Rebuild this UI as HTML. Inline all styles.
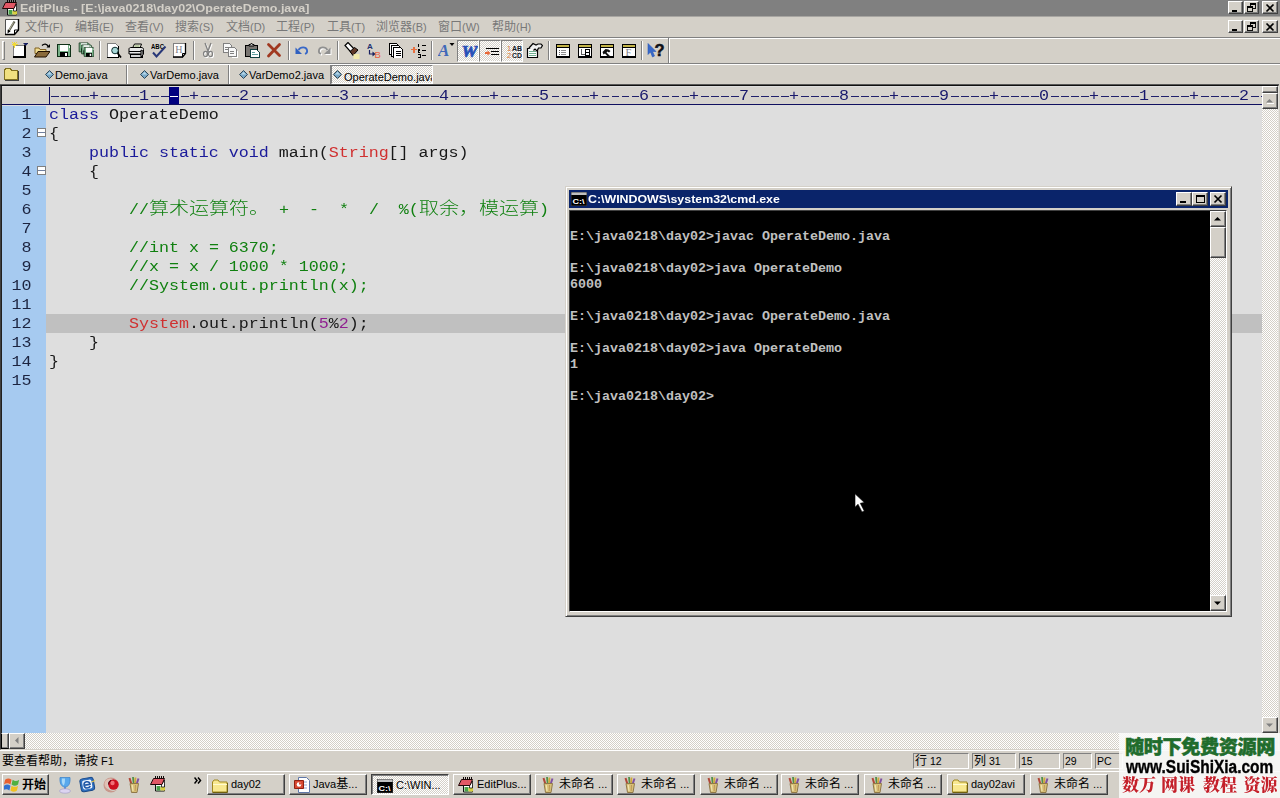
<!DOCTYPE html>
<html><head><meta charset="utf-8"><title>EditPlus</title>
<style>
*{box-sizing:border-box;margin:0;padding:0}
html,body{width:1280px;height:798px;overflow:hidden;background:#d4d0c8}
body{position:relative;font-family:"Liberation Sans",sans-serif;font-size:11px;color:#000}
.a{position:absolute}
.cjt{font-family:"Liberation Sans","Noto Sans CJK SC",sans-serif;font-size:12px;font-style:normal;font-weight:normal}
.ui{font-family:"Liberation Sans",sans-serif;font-size:11px;white-space:nowrap}
.mono{font-family:"Liberation Mono",monospace;white-space:pre}
/* classic 3d button */
.btn{position:absolute;background:#d4d0c8;border:1px solid;border-color:#fff #404040 #404040 #fff;box-shadow:inset -1px -1px 0 #808080}
.dither{background-image:conic-gradient(#fff 25%,#d4d0c8 0 50%,#fff 0 75%,#d4d0c8 0);background-size:2px 2px}
/* title */
#title{left:0;top:0;width:1280px;height:17px;background:#808080;border-bottom:1px solid #a8a6a2}
#title .t{left:20px;top:1px;color:#d4d0c8;font-weight:bold;font-size:11px;line-height:14px;transform:scaleX(1.135);transform-origin:0 0;white-space:nowrap}
#menu{left:0;top:16px;width:1280px;height:21px}
#menu .m{top:4px;color:#787878;line-height:15px;font-size:11px}
.hl{left:0;width:1280px;height:1px}
/* tabs */
#tabs{left:0;top:65px;width:1280px;height:20px}
.tab{top:0;height:20px;font-size:11px;line-height:20px}
/* editor */
#ed{left:0;top:85px;width:1279px;height:665px;background:#dedede;border:1px solid #404040;border-top-color:#101010;border-bottom-color:#d4d0c8;border-right-color:#e4e2de;box-shadow:inset 1px 0 0 #202020}
#ruler{left:1px;top:1px;width:1260px;height:18px;background:#d6d3ce;border-bottom:1px solid #101060;overflow:hidden}
#ruler .r{left:47px;top:0;font-size:14px;line-height:19px;color:#18186c;transform:scaleX(1.19028);transform-origin:0 0}
#gut{left:1px;top:20px;width:44px;height:628px;background:#a6caf0}
.ln{left:-10px;top:0;width:34px;height:19px;text-align:right;font-size:14px;line-height:21px;color:#1c2440;transform:scaleX(1.19028);transform-origin:0 0}
.cl{height:19px;font-size:14px;line-height:21px;color:#181818;transform:scaleX(1.19028);transform-origin:0 0}
.cl i,.ln i,.r i{display:inline-block;width:8.4014px;font-style:normal;text-align:center}
.kw{color:#1a1a9a}.ty{color:#d03030}.cm{color:#108010}.nu{color:#902090}
.cmcj{height:19px;line-height:19px;font-family:"Liberation Mono","Noto Sans CJK SC",monospace;font-weight:300;font-size:17px;color:#108010;white-space:nowrap;transform:scaleX(1.1767);transform-origin:0 0}
.fold{left:36px;width:9px;height:9px;background:#fff;border:1px solid #808080}
.fold i{position:absolute;left:0;top:3px;width:7px;height:1px;background:#7080a0}
/* cmd */
#cmd{left:565px;top:186px;width:667px;height:431px;background:#d4d0c8;border:1px solid;border-color:#d4d0c8 #404040 #404040 #d4d0c8;box-shadow:inset 1px 1px 0 #fff,inset -1px -1px 0 #808080}
#cmdt{left:3px;top:3px;width:659px;height:18px;background:#0a246a}
#cmdt .t{left:19px;top:2px;color:#fff;font-weight:bold;font-size:11px;line-height:15px;transform:scaleX(1.125);transform-origin:0 0;white-space:nowrap}
#con{left:3px;top:23px;width:641px;height:402px;background:#000;border-top:1px solid #404040;border-left:1px solid #404040;border-bottom:1px solid #fff}
#con .tx{left:0px;top:2px;font-family:"Liberation Mono",monospace;font-weight:bold;font-size:13.333px;line-height:16px;color:#c0c0c0;white-space:pre}
/* status */
#status{left:0;top:751px;width:1280px;height:20px}
.pane{top:2px;height:16px;border:1px solid;border-color:#808080 #fff #fff #808080;font-size:10.5px;line-height:14px;padding-left:1px;white-space:nowrap}
/* taskbar */
#task{left:0;top:771px;width:1280px;height:27px;background:#d4d0c8;border-top:1px solid #fff}
.tb{top:2px;height:21px;width:78px;font-size:11px;line-height:19px;white-space:nowrap;overflow:hidden}
.tb span{position:absolute;left:23px;top:0}
.wmr{font-family:"Liberation Serif","Noto Serif CJK SC",serif;font-weight:900;font-size:17px;line-height:17px;color:#c4202a;white-space:nowrap;filter:drop-shadow(0 0 1px #fff)}
</style></head><body>

<!-- ============ TITLE BAR ============ -->
<div id="title" class="a">
  <div class="a t">EditPlus - [E:\java0218\day02\OperateDemo.java]</div>
  <svg class="a" style="left:2px;top:0px" width="16" height="16" viewBox="0 0 16 16" ><path d="M5.500 8.500h9v6.500h-9z" fill="#fff" stroke="#101010"/><path d="M6.500 10h4v4.500h-4z" fill="#48a048"/><path d="M10.500 11h4.500v3.500h-4.500z" fill="#d8d040"/><path d="M11.500 8.500l3-4.500v7h-3z" fill="#fff" stroke="#101010" stroke-width=".8"/><path d="M3.500 2.500h11l-2.500 6h-11.500z" fill="#e25866" stroke="#200808"/><path d="M5.500 0v2.500M7.500 0v2.500M9.500 0v2.500M11.500 0v2.500M13.500 0v2.500" stroke="#100808"/></svg>
  <div class="btn" style="left:1228px;top:1px;width:15px;height:13px"><svg class="a" style="left:0;top:0" width="13" height="11" viewBox="0 0 14 11" shape-rendering="crispEdges"><path d="M3 8h6v2h-6z" fill="#000"/></svg></div><div class="btn" style="left:1244px;top:1px;width:15px;height:13px"><svg class="a" style="left:0;top:0" width="13" height="11" viewBox="0 0 14 11" shape-rendering="crispEdges"><path d="M5.500 1.500h6v5h-6z" fill="none" stroke="#000"/><path d="M5 1h7v2h-7z" fill="#000"/><path d="M2.500 4.500h6v5h-6z" fill="#d4d0c8" stroke="#000"/><path d="M2 4h7v2h-7z" fill="#000"/></svg></div><div class="btn" style="left:1262px;top:1px;width:16px;height:13px"><svg class="a" style="left:0;top:0" width="14" height="11" viewBox="0 0 14 11" shape-rendering="crispEdges"><path d="M3.5 2.5l7 7M10.5 2.5l-7 7" stroke="#000" stroke-width="1.7" shape-rendering="auto"/></svg></div>
</div>

<!-- ============ MENU BAR ============ -->
<div id="menu" class="a ui">
  <svg class="a" style="left:4px;top:3px" width="16" height="17" viewBox="0 0 16 17" ><path d="M1.500 .500h13v10.500l-4 4.500h-9z" fill="#fff" stroke="#505050"/><path d="M14.500 0v11l-4 4.500h-9.500" fill="none" stroke="#000" stroke-width="1.400"/><path d="M10.500 15v-4h4" fill="none" stroke="#000"/><path d="M10.500 2.500l-6 10" stroke="#585848" stroke-width="2.200"/><path d="M9.500 3.500l-5 8.500" stroke="#c8c8b0" stroke-width=".8"/><path d="M3.500 14.500l.3-4 2.800 1.700z" fill="#000"/></svg>
  <div class="a m" style="left:25px"><em class="cjt">文件</em>(F)</div>
  <div class="a m" style="left:75px"><em class="cjt">编辑</em>(E)</div>
  <div class="a m" style="left:125px"><em class="cjt">查看</em>(V)</div>
  <div class="a m" style="left:175px"><em class="cjt">搜索</em>(S)</div>
  <div class="a m" style="left:226px"><em class="cjt">文档</em>(D)</div>
  <div class="a m" style="left:276px"><em class="cjt">工程</em>(P)</div>
  <div class="a m" style="left:327px"><em class="cjt">工具</em>(T)</div>
  <div class="a m" style="left:376px"><em class="cjt">浏览器</em>(B)</div>
  <div class="a m" style="left:438px"><em class="cjt">窗口</em>(W)</div>
  <div class="a m" style="left:492px"><em class="cjt">帮助</em>(H)</div>
  <div class="btn" style="left:1228px;top:4px;width:15px;height:13px"><svg class="a" style="left:0;top:0" width="13" height="11" viewBox="0 0 14 11" shape-rendering="crispEdges"><path d="M3 8h6v2h-6z" fill="#000"/></svg></div><div class="btn" style="left:1244px;top:4px;width:15px;height:13px"><svg class="a" style="left:0;top:0" width="13" height="11" viewBox="0 0 14 11" shape-rendering="crispEdges"><path d="M5.500 1.500h6v5h-6z" fill="none" stroke="#000"/><path d="M5 1h7v2h-7z" fill="#000"/><path d="M2.500 4.500h6v5h-6z" fill="#d4d0c8" stroke="#000"/><path d="M2 4h7v2h-7z" fill="#000"/></svg></div><div class="btn" style="left:1262px;top:4px;width:16px;height:13px"><svg class="a" style="left:0;top:0" width="14" height="11" viewBox="0 0 14 11" shape-rendering="crispEdges"><path d="M3.5 2.5l7 7M10.5 2.5l-7 7" stroke="#000" stroke-width="1.7" shape-rendering="auto"/></svg></div>
</div>
<div class="a hl" style="top:37px;background:#808080"></div>
<div class="a hl" style="top:38px;background:#fff"></div>

<!-- ============ TOOLBAR ============ -->
<div id="tool" class="a" style="left:0;top:39px;width:1280px;height:24px">
<div class="a" style="left:2px;top:2px;width:3px;height:19px;border:1px solid;border-color:#fff #808080 #808080 #fff"></div><svg class="a" style="left:12px;top:3px" width="16" height="16" viewBox="0 0 16 16" shape-rendering="crispEdges" ><path d="M1.500 3.500h11v11h-11z" fill="#fff" stroke="#808080"/><path d="M13 3v12h-12" fill="none" stroke="#000" stroke-width="1.4"/><path d="M2.500 0v6M0 2.500h5.500M.5 .5l4 4M4.500 .5l-4 4" stroke="#f0d838"/><path d="M11 1h5.500l-2.750 3z" fill="#182060" shape-rendering="auto"/></svg><svg class="a" style="left:34px;top:3px" width="16" height="16" viewBox="0 0 16 16" shape-rendering="crispEdges" ><path d="M1 6h4l1 1.500h6v4h-11z" fill="#f0dc90" stroke="#806020" shape-rendering="auto"/><path d="M0.500 15l3.500-5.500h12l-4 5.500z" fill="#8a6a3a" stroke="#201000" shape-rendering="auto"/><path d="M8 3.500c2-2 5-2 6.500 1.500" fill="none" stroke="#000" stroke-width="1.3" shape-rendering="auto"/><path d="M12.500 5.500h3.500v-3.500z" fill="#000" shape-rendering="auto"/></svg><svg class="a" style="left:56px;top:3px" width="16" height="16" viewBox="0 0 16 16" shape-rendering="crispEdges" ><path d="M1.500 2.500h12l1 1v11h-13z" fill="#78b088" stroke="#103018"/><path d="M4 3h8v6h-8z" fill="#fff"/><path d="M4 10h8v5h-8z" fill="#000"/><path d="M9 11h2v3h-2z" fill="#fff"/><path d="M13 4h1v2h-1z" fill="#fff"/></svg><svg class="a" style="left:78px;top:3px" width="16" height="16" viewBox="0 0 16 16" ><g transform="translate(0,-1) scale(.75)"><path d="M1.500 2.500h12l1 1v11h-13z" fill="#78b088" stroke="#103018"/><path d="M4 3h8v6h-8z" fill="#fff"/><path d="M4 10h8v5h-8z" fill="#000"/><path d="M9 11h2v3h-2z" fill="#fff"/><path d="M13 4h1v2h-1z" fill="#fff"/></g><g transform="translate(2.500,1) scale(.75)"><path d="M1.500 2.500h12l1 1v11h-13z" fill="#78b088" stroke="#103018"/><path d="M4 3h8v6h-8z" fill="#fff"/><path d="M4 10h8v5h-8z" fill="#000"/><path d="M9 11h2v3h-2z" fill="#fff"/><path d="M13 4h1v2h-1z" fill="#fff"/></g><g transform="translate(5,3.500) scale(.75)"><path d="M1.500 2.500h12l1 1v11h-13z" fill="#78b088" stroke="#103018"/><path d="M4 3h8v6h-8z" fill="#fff"/><path d="M4 10h8v5h-8z" fill="#000"/><path d="M9 11h2v3h-2z" fill="#fff"/><path d="M13 4h1v2h-1z" fill="#fff"/></g></svg><div class="a" style="left:99px;top:2px;width:1px;height:19px;background:#808080"></div><div class="a" style="left:100px;top:2px;width:1px;height:19px;background:#fff"></div><svg class="a" style="left:106px;top:3px" width="16" height="16" viewBox="0 0 16 16" shape-rendering="crispEdges" ><path d="M1.500 1.500h8l3 3v10.500h-11z" fill="#fff" stroke="#808080"/><path d="M12.500 4v11.500h-11.500" fill="none" stroke="#000" stroke-width="1.3"/><circle cx="9" cy="8.500" r="3.300" fill="#a8d8d8" stroke="#103030" shape-rendering="auto"/><path d="M11.500 11l3.500 4.500" stroke="#000" stroke-width="1.800" shape-rendering="auto"/></svg><svg class="a" style="left:128px;top:3px" width="16" height="16" viewBox="0 0 16 16" shape-rendering="crispEdges" ><path d="M4.500 6l2-4h7l-1.500 4z" fill="#f4f4e4" stroke="#000" shape-rendering="auto"/><path d="M6.500 4h5" stroke="#80a060" shape-rendering="auto"/><path d="M1 7c0-1 1-1.500 2-1.500h10c1.500 0 2.500 .5 2.500 2v4.500h-14.500z" fill="#e8e8e8" stroke="#000" shape-rendering="auto"/><path d="M1 9.500h12M1.500 12.500h12" stroke="#000" stroke-width="1.200"/><path d="M2 12.500h12v2.500h-12z" fill="#d0d0d0" stroke="#000"/><path d="M13 8l2 1v4l-2 2z" fill="#c0c0c0" stroke="#000" shape-rendering="auto"/></svg><svg class="a" style="left:151px;top:3px" width="16" height="16" viewBox="0 0 16 16" ><text x="0" y="7" font-family="Liberation Sans" font-weight="bold" font-size="7.500" fill="#000" textLength="13" lengthAdjust="spacingAndGlyphs">ABC</text><path d="M2 10.500l3.500 4 9-10" fill="none" stroke="#283878" stroke-width="2"/></svg><svg class="a" style="left:172px;top:3px" width="16" height="16" viewBox="0 0 16 16" shape-rendering="crispEdges" ><path d="M1.500 1.500h12v10l-3 3.500h-9z" fill="#fff" stroke="#808080"/><path d="M13.500 1v10.500l-3 3.500h-9.500" fill="none" stroke="#000" stroke-width="1.300" shape-rendering="auto"/><path d="M10.500 15v-3.500h3" fill="none" stroke="#000" shape-rendering="auto"/><text x="3.200" y="10.500" font-family="Liberation Serif" font-size="10" fill="#808088">H</text></svg><div class="a" style="left:193px;top:2px;width:1px;height:19px;background:#808080"></div><div class="a" style="left:194px;top:2px;width:1px;height:19px;background:#fff"></div><svg class="a" style="left:200px;top:3px" width="16" height="16" viewBox="0 0 16 16" ><g transform="translate(1,1)"><path d="M5 1l3 8M11 1l-3 8" fill="none" stroke="#fff" stroke-width="1.300"/><ellipse cx="5.500" cy="12" rx="2" ry="2.700" fill="none" stroke="#fff" stroke-width="1.200"/><ellipse cx="10.500" cy="12" rx="2" ry="2.700" fill="none" stroke="#fff" stroke-width="1.200"/><path d="M7 10.500l1-1.500 1 1.500" fill="none" stroke="#fff"/></g><path d="M5 1l3 8M11 1l-3 8" fill="none" stroke="#808080" stroke-width="1.300"/><ellipse cx="5.500" cy="12" rx="2" ry="2.700" fill="none" stroke="#808080" stroke-width="1.200"/><ellipse cx="10.500" cy="12" rx="2" ry="2.700" fill="none" stroke="#808080" stroke-width="1.200"/><path d="M7 10.500l1-1.500 1 1.500" fill="none" stroke="#808080"/></svg><svg class="a" style="left:222px;top:3px" width="16" height="16" viewBox="0 0 16 16" shape-rendering="crispEdges" ><g transform="translate(1,1)"><path d="M.500 .500h6l2 2v7h-8z" fill="#f8f8f8" stroke="#808080"/><path d="M2 4h4M2 6h4" stroke="#808080"/></g><g transform="translate(6,5)"><path d="M.500 .500h6l2 2v7h-8z" fill="#f8f8f8" stroke="#808080"/><path d="M2 4h4M2 6h4" stroke="#808080"/></g><path d="M10 15.500h5.500v-7" fill="none" stroke="#fff"/></svg><svg class="a" style="left:244px;top:3px" width="16" height="16" viewBox="0 0 16 16" shape-rendering="crispEdges" ><path d="M1.500 3.500h12v11h-12z" fill="#787470" stroke="#000" stroke-width="1.300"/><path d="M5 4v-1.500h1.500l1-1.500 1 1.500h1.500v1.500z" fill="#d0d0d0" stroke="#000" shape-rendering="auto"/><path d="M6.500 7.500h6l3 3v5h-9z" fill="#fff" stroke="#104040"/><path d="M8 10.500h3M8 12.500h6" stroke="#60a0a0"/></svg><svg class="a" style="left:266px;top:3px" width="16" height="16" viewBox="0 0 16 16" ><path d="M2.500 2.500l11 11M13.500 2.500l-11 11.500" stroke="#a03820" stroke-width="2.800" stroke-linecap="round"/></svg><div class="a" style="left:288px;top:2px;width:1px;height:19px;background:#808080"></div><div class="a" style="left:289px;top:2px;width:1px;height:19px;background:#fff"></div><svg class="a" style="left:294px;top:3px" width="16" height="16" viewBox="0 0 16 16" ><path d="M4.500 8c2-3.500 7.500-3.500 8.500 0 .5 2-.5 3.500-2 4" fill="none" stroke="#3868c8" stroke-width="1.800"/><path d="M1.500 5.500v6.500h6.500z" fill="#3060c0"/></svg><svg class="a" style="left:316px;top:3px" width="16" height="16" viewBox="0 0 16 16" ><g transform="translate(1,1)"><path d="M11.500 8c-2-3.500-7.500-3.500-8.500 0-.5 2 .5 3.500 2 4" fill="none" stroke="#fff" stroke-width="1.800"/><path d="M14.500 5.500v6.500h-6.500z" fill="#fff"/></g><path d="M11.500 8c-2-3.500-7.500-3.500-8.500 0-.5 2 .5 3.500 2 4" fill="none" stroke="#909090" stroke-width="1.800"/><path d="M14.500 5.500v6.500h-6.500z" fill="#909090"/></svg><div class="a" style="left:337px;top:2px;width:1px;height:19px;background:#808080"></div><div class="a" style="left:338px;top:2px;width:1px;height:19px;background:#fff"></div><svg class="a" style="left:344px;top:3px" width="17" height="17" viewBox="0 0 17 17" ><path d="M1 3.500l3-3 8 8.500-3.500 3z" fill="#fff" stroke="#000" stroke-width="1.200"/><path d="M6 9.500l4.500-4 3.500 2.500-5 5.500z" fill="#603828" stroke="#000"/><path d="M9.500 12h6v5h-6z" fill="#f8f0a8" opacity=".85"/></svg><svg class="a" style="left:366px;top:3px" width="16" height="16" viewBox="0 0 16 16" ><text x="1" y="7" font-family="Liberation Sans" font-weight="bold" font-size="8" fill="#203070">A</text><path d="M3.500 8v4h4" fill="none" stroke="#182060" stroke-width="1.200"/><path d="M6.500 9.500l3 2.500-3 2.500z" fill="#182060"/><text x="8.500" y="15.500" font-family="Liberation Sans" font-size="9.500" fill="#e86040">B</text></svg><svg class="a" style="left:388px;top:3px" width="16" height="16" viewBox="0 0 16 16" shape-rendering="crispEdges" ><g transform="translate(1,1)"><path d="M.500 .500h7l2 2v8.500h-9z" fill="#fff" stroke="#000"/></g><g transform="translate(3,3)"><path d="M.500 .500h7l2 2v8.500h-9z" fill="#fff" stroke="#000"/></g><g transform="translate(5,5)"><path d="M.500 .500h7l2 2v8.500h-9z" fill="#fff" stroke="#000"/><path d="M2.500 4.500h5M2.500 6.500h5M2.500 8.500h5" stroke="#000"/></g></svg><svg class="a" style="left:410px;top:3px" width="16" height="16" viewBox="0 0 16 16" shape-rendering="crispEdges" ><path d="M1 7.500h6M4 4.500v6" stroke="#e87040" stroke-width="1.400"/><path d="M8.500 2v3M8 7h1.500v1.500h-1.500v1.500h2M8 12h2v3h-2" fill="none" stroke="#000"/><path d="M11.500 3.500h4M11.500 8.500h4M11.500 13.500h4" stroke="#000" stroke-width="1.300"/></svg><div class="a" style="left:431px;top:2px;width:1px;height:19px;background:#808080"></div><div class="a" style="left:432px;top:2px;width:1px;height:19px;background:#fff"></div><svg class="a" style="left:438px;top:3px" width="17" height="16" viewBox="0 0 17 16" ><text x="0" y="14" font-family="Liberation Serif" font-style="italic" font-weight="bold" font-size="17" fill="#4068b8">A</text><path d="M11.500 1h5l-2.500 3z" fill="#000"/></svg><div class="a dither" style="left:457px;top:1px;width:22px;height:22px;border:1px solid;border-color:#808080 #fff #fff #808080"></div><div class="a dither" style="left:479px;top:1px;width:22px;height:22px;border:1px solid;border-color:#808080 #fff #fff #808080"></div><div class="a dither" style="left:501px;top:1px;width:22px;height:22px;border:1px solid;border-color:#808080 #fff #fff #808080"></div><svg class="a" style="left:462px;top:4px" width="16" height="16" viewBox="0 0 16 16" ><text x="-.500" y="14" font-family="Liberation Serif" font-style="italic" font-weight="bold" font-size="16" fill="#2850b8" stroke="#2850b8" stroke-width=".7" textLength="16" lengthAdjust="spacingAndGlyphs">W</text></svg><svg class="a" style="left:484px;top:4px" width="16" height="16" viewBox="0 0 16 16" shape-rendering="crispEdges" ><path d="M2 5.500h13M7 8.500h8M7 11.500h8" stroke="#000" stroke-width="1.200"/><path d="M1 10h4" stroke="#e86838" stroke-width="1.400"/><path d="M3.500 7.500l3 2.500-3 2.500z" fill="#e86838" shape-rendering="auto"/></svg><svg class="a" style="left:506px;top:4px" width="16" height="16" viewBox="0 0 16 16" ><text x="1" y="7.500" font-family="Liberation Sans" font-size="7.500" fill="#d87838">1</text><text x="1" y="14.500" font-family="Liberation Sans" font-size="7.500" fill="#d87838">2</text><text x="6" y="7.500" font-family="Liberation Sans" font-weight="bold" font-size="7.500" fill="#101828" textLength="10" lengthAdjust="spacingAndGlyphs">AB</text><text x="6" y="14.500" font-family="Liberation Sans" font-weight="bold" font-size="7.500" fill="#101828" textLength="10" lengthAdjust="spacingAndGlyphs">CD</text></svg><svg class="a" style="left:526px;top:3px" width="17" height="16" viewBox="0 0 17 16" ><path d="M1.500 6.500h10v9h-10z" fill="#fff" stroke="#000" stroke-width="1.200"/><path d="M3 9.500h7M3 11.500h7M3 13.500h7" stroke="#70b090"/><path d="M3 6l4-4.500 3 1.500 2-1h3l1.500 1.500-1.500 2.500h-2.500l-1.500 3-2-2-1.500 1.500" fill="#f0f0f0" stroke="#000" stroke-width="1.200"/></svg><div class="a" style="left:548px;top:2px;width:1px;height:19px;background:#808080"></div><div class="a" style="left:549px;top:2px;width:1px;height:19px;background:#fff"></div><svg class="a" style="left:556px;top:3px" width="16" height="16" viewBox="0 0 16 16" shape-rendering="crispEdges" ><path d="M.500 2.500h13v12.500h-13z" fill="#fff" stroke="#000" stroke-width="1.200"/><path d="M1 3h12v2h-12z" fill="#c4b448"/><path d="M0 5.500h14" stroke="#000"/><path d="M3 8.500h1M3 10.500h1M3 12.500h1" stroke="#606060"/><path d="M5 8.500h5M5 10.500h5M5 12.500h5" stroke="#909090"/></svg><svg class="a" style="left:578px;top:3px" width="16" height="16" viewBox="0 0 16 16" shape-rendering="crispEdges" ><path d="M.500 2.500h13v12.500h-13z" fill="#fff" stroke="#000" stroke-width="1.200"/><path d="M1 3h12v2h-12z" fill="#c4b448"/><path d="M0 5.500h14" stroke="#000"/><path d="M3.500 7v5.500h4" fill="none" stroke="#606060"/><path d="M7.500 7.500h4v6h-4z" fill="#fff" stroke="#000" stroke-width="1.600"/><path d="M8 10.500h3" stroke="#000"/></svg><svg class="a" style="left:600px;top:3px" width="16" height="16" viewBox="0 0 16 16" shape-rendering="crispEdges" ><path d="M.500 2.500h13v12.500h-13z" fill="#fff" stroke="#000" stroke-width="1.200"/><path d="M1 3h12v2h-12z" fill="#c4b448"/><path d="M0 5.500h14" stroke="#000"/><path d="M2.500 10l3-3 3 .500 2 1.500-1.500 1.500-1.500-1-1 1 3.500 3.500-1.500 1.500-3.500-4-1.500 1z" fill="#101010" shape-rendering="auto"/></svg><svg class="a" style="left:622px;top:3px" width="16" height="16" viewBox="0 0 16 16" shape-rendering="crispEdges" ><path d="M.500 2.500h13v12.500h-13z" fill="#fff" stroke="#000" stroke-width="1.200"/><path d="M1 3h12v2h-12z" fill="#c4b448"/><path d="M0 5.500h14" stroke="#000"/><text x="3.500" y="14" font-family="Liberation Serif" font-size="10.500" fill="#808088" shape-rendering="auto">F</text></svg><div class="a" style="left:641px;top:2px;width:1px;height:19px;background:#808080"></div><div class="a" style="left:642px;top:2px;width:1px;height:19px;background:#fff"></div><svg class="a" style="left:647px;top:3px" width="18" height="16" viewBox="0 0 18 16" ><path d="M1 1.500v11l2.500-2.500 2 5 2-1-2-4.500h3.500z" fill="#3868c8" stroke="#2858b8" stroke-width=".6"/><text x="7.500" y="14" font-family="Liberation Sans" font-weight="bold" font-size="16.500" fill="#101018" stroke="#101018" stroke-width=".5">?</text></svg><div class="a" style="left:668px;top:-1px;width:1px;height:25px;background:#808080"></div><div class="a" style="left:669px;top:-1px;width:1px;height:25px;background:#fff"></div>
</div>
<div class="a hl" style="top:63px;background:#808080"></div>
<div class="a hl" style="top:64px;background:#fff"></div>

<!-- ============ TABS ============ -->
<div id="tabs" class="a ui">
<svg class="a" style="left:3px;top:2px" width="17" height="14" viewBox="0 0 17 14" shape-rendering="crispEdges" ><path d="M1.5 3.5l1-2h5l1 2h6v9h-13z" fill="#f0e080" stroke="#807020"/><path d="M15.500 4v9.500h-13.500" fill="none" stroke="#404040"/></svg><div class="a" style="left:24px;top:0;width:1px;height:19px;background:#fff"></div><div class="a tab" style="left:25px;width:102px;border-right:1px solid #808080;box-shadow:1px 0 0 #fff"><svg class="a" style="left:20px;top:5px" width="9" height="9" viewBox="0 0 9 9" shape-rendering="crispEdges" ><path d="M4.5 .5l4 4-4 4-4-4z" fill="#78a8c8" stroke="#304858" shape-rendering="auto"/><path d="M4.5 2l2.500 2.500h-5z" fill="#b8d8e8" shape-rendering="auto"/></svg><div class="a" style="left:30px;top:0">Demo.java</div></div><div class="a tab" style="left:127px;width:102px;border-right:1px solid #808080;box-shadow:1px 0 0 #fff"><svg class="a" style="left:13px;top:5px" width="9" height="9" viewBox="0 0 9 9" shape-rendering="crispEdges" ><path d="M4.5 .5l4 4-4 4-4-4z" fill="#78a8c8" stroke="#304858" shape-rendering="auto"/><path d="M4.5 2l2.500 2.500h-5z" fill="#b8d8e8" shape-rendering="auto"/></svg><div class="a" style="left:23px;top:0">VarDemo.java</div></div><div class="a tab" style="left:229px;width:102px;border-right:1px solid #808080;box-shadow:1px 0 0 #fff"><svg class="a" style="left:10px;top:5px" width="9" height="9" viewBox="0 0 9 9" shape-rendering="crispEdges" ><path d="M4.5 .5l4 4-4 4-4-4z" fill="#78a8c8" stroke="#304858" shape-rendering="auto"/><path d="M4.5 2l2.500 2.500h-5z" fill="#b8d8e8" shape-rendering="auto"/></svg><div class="a" style="left:20px;top:0">VarDemo2.java</div></div><div class="a tab dither" style="left:331px;width:102px;height:19px;border:1px solid;border-color:#808080 #fff #fff #808080;overflow:hidden"><svg class="a" style="left:1px;top:4px" width="9" height="9" viewBox="0 0 9 9" shape-rendering="crispEdges" ><path d="M4.5 .5l4 4-4 4-4-4z" fill="#78a8c8" stroke="#304858" shape-rendering="auto"/><path d="M4.5 2l2.500 2.500h-5z" fill="#b8d8e8" shape-rendering="auto"/></svg><div class="a" style="left:12px;top:1px">OperateDemo.java</div></div>
</div>

<div class="a hl" style="top:84px;width:1279px;background:#585858"></div>
<!-- ============ EDITOR ============ -->
<div id="ed" class="a">
<div id="ruler" class="a"><div class="a" style="left:47px;top:0;width:1px;height:18px;background:#101060"></div><div class="a" style="left:48px;top:9px;width:1213px;height:1px;background:repeating-linear-gradient(90deg,transparent 0 1.5px,#20206c 1.5px 9px,transparent 9px 10px)"></div><div class="a mono r" style="left:87px;background:#d6d3ce;height:17px;width:9px"><i>+</i></div><div class="a mono r" style="left:137px;background:#d6d3ce;height:17px;width:9px"><i>1</i></div><div class="a mono r" style="left:187px;background:#d6d3ce;height:17px;width:9px"><i>+</i></div><div class="a mono r" style="left:237px;background:#d6d3ce;height:17px;width:9px"><i>2</i></div><div class="a mono r" style="left:287px;background:#d6d3ce;height:17px;width:9px"><i>+</i></div><div class="a mono r" style="left:337px;background:#d6d3ce;height:17px;width:9px"><i>3</i></div><div class="a mono r" style="left:387px;background:#d6d3ce;height:17px;width:9px"><i>+</i></div><div class="a mono r" style="left:437px;background:#d6d3ce;height:17px;width:9px"><i>4</i></div><div class="a mono r" style="left:487px;background:#d6d3ce;height:17px;width:9px"><i>+</i></div><div class="a mono r" style="left:537px;background:#d6d3ce;height:17px;width:9px"><i>5</i></div><div class="a mono r" style="left:587px;background:#d6d3ce;height:17px;width:9px"><i>+</i></div><div class="a mono r" style="left:637px;background:#d6d3ce;height:17px;width:9px"><i>6</i></div><div class="a mono r" style="left:687px;background:#d6d3ce;height:17px;width:9px"><i>+</i></div><div class="a mono r" style="left:737px;background:#d6d3ce;height:17px;width:9px"><i>7</i></div><div class="a mono r" style="left:787px;background:#d6d3ce;height:17px;width:9px"><i>+</i></div><div class="a mono r" style="left:837px;background:#d6d3ce;height:17px;width:9px"><i>8</i></div><div class="a mono r" style="left:887px;background:#d6d3ce;height:17px;width:9px"><i>+</i></div><div class="a mono r" style="left:937px;background:#d6d3ce;height:17px;width:9px"><i>9</i></div><div class="a mono r" style="left:987px;background:#d6d3ce;height:17px;width:9px"><i>+</i></div><div class="a mono r" style="left:1037px;background:#d6d3ce;height:17px;width:9px"><i>0</i></div><div class="a mono r" style="left:1087px;background:#d6d3ce;height:17px;width:9px"><i>+</i></div><div class="a mono r" style="left:1137px;background:#d6d3ce;height:17px;width:9px"><i>1</i></div><div class="a mono r" style="left:1187px;background:#d6d3ce;height:17px;width:9px"><i>+</i></div><div class="a mono r" style="left:1237px;background:#d6d3ce;height:17px;width:9px"><i>2</i></div><div class="a" style="left:167px;top:0;width:10px;height:18px;background:#000080"><div class="a" style="left:1px;top:9px;width:8px;height:1px;background:#fff"></div></div></div>
<div id="gut" class="a"></div>
<div class="a" style="left:45px;top:228px;width:1216px;height:19px;background:#c0c0c0"></div>
<div class="a ln mono" style="top:19px"><i>1</i></div>
<div class="a cl mono" style="left:48px;top:19px"><span class="kw"><i>c</i><i>l</i><i>a</i><i>s</i><i>s</i></span><i> </i><i>O</i><i>p</i><i>e</i><i>r</i><i>a</i><i>t</i><i>e</i><i>D</i><i>e</i><i>m</i><i>o</i></div>
<div class="a ln mono" style="top:38px"><i>2</i></div>
<div class="a cl mono" style="left:48px;top:38px"><i>{</i></div>
<div class="a ln mono" style="top:57px"><i>3</i></div>
<div class="a cl mono" style="left:88px;top:57px"><span class="kw"><i>p</i><i>u</i><i>b</i><i>l</i><i>i</i><i>c</i></span><i> </i><span class="kw"><i>s</i><i>t</i><i>a</i><i>t</i><i>i</i><i>c</i></span><i> </i><span class="kw"><i>v</i><i>o</i><i>i</i><i>d</i></span><i> </i><i>m</i><i>a</i><i>i</i><i>n</i><i>(</i><span class="ty"><i>S</i><i>t</i><i>r</i><i>i</i><i>n</i><i>g</i></span><i>[</i><i>]</i><i> </i><i>a</i><i>r</i><i>g</i><i>s</i><i>)</i></div>
<div class="a ln mono" style="top:76px"><i>4</i></div>
<div class="a cl mono" style="left:88px;top:76px"><i>{</i></div>
<div class="a ln mono" style="top:95px"><i>5</i></div>
<div class="a ln mono" style="top:114px"><i>6</i></div>
<div class="a cl mono" style="left:128px;top:114px"><span class="cm"><i>/</i><i>/</i></span></div>
<div class="a cmcj" style="left:148px;top:114px">算术运算符。</div>
<div class="a cl mono" style="left:278px;top:114px"><span class="cm"><i>+</i><i> </i><i> </i><i>-</i><i> </i><i> </i><i>*</i><i> </i><i> </i><i>/</i><i> </i><i> </i><i>%</i><i>(</i></span></div>
<div class="a cmcj" style="left:418px;top:114px">取余，模运算</div>
<div class="a cl mono" style="left:538px;top:114px"><span class="cm"><i>)</i></span></div>
<div class="a ln mono" style="top:133px"><i>7</i></div>
<div class="a ln mono" style="top:152px"><i>8</i></div>
<div class="a cl mono" style="left:128px;top:152px"><span class="cm"><i>/</i><i>/</i><i>i</i><i>n</i><i>t</i><i> </i><i>x</i><i> </i><i>=</i><i> </i><i>6</i><i>3</i><i>7</i><i>0</i><i>;</i></span></div>
<div class="a ln mono" style="top:171px"><i>9</i></div>
<div class="a cl mono" style="left:128px;top:171px"><span class="cm"><i>/</i><i>/</i><i>x</i><i> </i><i>=</i><i> </i><i>x</i><i> </i><i>/</i><i> </i><i>1</i><i>0</i><i>0</i><i>0</i><i> </i><i>*</i><i> </i><i>1</i><i>0</i><i>0</i><i>0</i><i>;</i></span></div>
<div class="a ln mono" style="top:190px"><i>1</i><i>0</i></div>
<div class="a cl mono" style="left:128px;top:190px"><span class="cm"><i>/</i><i>/</i><i>S</i><i>y</i><i>s</i><i>t</i><i>e</i><i>m</i><i>.</i><i>o</i><i>u</i><i>t</i><i>.</i><i>p</i><i>r</i><i>i</i><i>n</i><i>t</i><i>l</i><i>n</i><i>(</i><i>x</i><i>)</i><i>;</i></span></div>
<div class="a ln mono" style="top:209px"><i>1</i><i>1</i></div>
<div class="a ln mono" style="top:228px"><i>1</i><i>2</i></div>
<div class="a cl mono" style="left:128px;top:228px"><span class="ty"><i>S</i><i>y</i><i>s</i><i>t</i><i>e</i><i>m</i></span><i>.</i><i>o</i><i>u</i><i>t</i><i>.</i><i>p</i><i>r</i><i>i</i><i>n</i><i>t</i><i>l</i><i>n</i><i>(</i><span class="nu"><i>5</i></span><i>%</i><span class="nu"><i>2</i></span><i>)</i><i>;</i></div>
<div class="a ln mono" style="top:247px"><i>1</i><i>3</i></div>
<div class="a cl mono" style="left:88px;top:247px"><i>}</i></div>
<div class="a ln mono" style="top:266px"><i>1</i><i>4</i></div>
<div class="a cl mono" style="left:48px;top:266px"><i>}</i></div>
<div class="a ln mono" style="top:285px"><i>1</i><i>5</i></div>
<div class="a fold" style="top:42px"><i></i></div>
<div class="a fold" style="top:80px"><i></i></div>
<div class="a dither" style="left:1261px;top:0;width:16px;height:647px"></div>
<div class="btn" style="left:1261px;top:0;width:16px;height:7px"></div>
<div class="btn" style="left:1261px;top:7px;width:16px;height:16px"><svg class="a" style="left:3px;top:4px" width="9" height="6"><path d="M0 4.500h7L3.500 1z" fill="#808080"/><path d="M1 5.500h7" stroke="#fff"/></svg></div>
<div class="btn" style="left:1261px;top:631px;width:16px;height:16px"><svg class="a" style="left:3px;top:5px" width="9" height="6"><path d="M0 .5h7L3.500 4z" fill="#808080"/></svg></div>
<div class="a dither" style="left:0;top:647px;width:1261px;height:16px"></div>
<div class="btn" style="left:0;top:647px;width:8px;height:16px;border-left-color:#000;border-bottom-color:#000"></div>
<div class="btn" style="left:8px;top:647px;width:16px;height:16px"><svg class="a" style="left:4px;top:3px" width="6" height="9"><path d="M4.500 0v7L1 3.500z" fill="#808080"/></svg></div>
<div class="a" style="left:1261px;top:647px;width:16px;height:16px;background:#d4d0c8"></div>
</div>

<div class="a hl" style="top:750px;background:#fff"></div>
<!-- ============ CMD WINDOW ============ -->
<div id="cmd" class="a">
<div id="cmdt" class="a"><svg class="a" style="left:2px;top:2px" width="16" height="14" viewBox="0 0 16 14" ><path d="M0 0h16v14h-16z" fill="#000"/><path d="M0 0h16v3h-16z" fill="#c0c0c0"/><path d="M0 0h16v14h-16z" fill="none" stroke="#404040"/><text x="1.500" y="11.500" font-family="Liberation Sans" font-weight="bold" font-size="7.500" fill="#fff" textLength="12" lengthAdjust="spacingAndGlyphs" shape-rendering="auto">C:\</text></svg><div class="a t">C:\WINDOWS\system32\cmd.exe</div><div class="btn" style="left:607px;top:2px;width:16px;height:14px"><svg class="a" style="left:0;top:0" width="14" height="12" viewBox="0 0 14 12" shape-rendering="crispEdges"><path d="M3 8h6v2h-6z" fill="#000"/></svg></div><div class="btn" style="left:623px;top:2px;width:16px;height:14px"><svg class="a" style="left:0;top:0" width="14" height="12" viewBox="0 0 14 12" shape-rendering="crispEdges"><path d="M3.500 2.500h8v7h-8z" fill="none" stroke="#000"/><path d="M3 2h9v2h-9z" fill="#000"/></svg></div><div class="btn" style="left:641px;top:2px;width:16px;height:14px"><svg class="a" style="left:0;top:0" width="14" height="12" viewBox="0 0 14 12" shape-rendering="crispEdges"><path d="M3.5 2.5l7 7M10.5 2.5l-7 7" stroke="#000" stroke-width="1.7" shape-rendering="auto"/></svg></div></div>
<div id="con" class="a"><div class="a tx">
E:\java0218\day02>javac OperateDemo.java

E:\java0218\day02>java OperateDemo
6000

E:\java0218\day02>javac OperateDemo.java

E:\java0218\day02>java OperateDemo
1

E:\java0218\day02></div></div>
<div class="a" style="left:644px;top:23px;width:17px;height:402px;border-top:1px solid #404040;border-right:1px solid #fff;border-bottom:1px solid #fff"></div>
<div class="a dither" style="left:644px;top:24px;width:16px;height:400px"></div>
<div class="btn" style="left:644px;top:24px;width:16px;height:16px"><svg class="a" style="left:3px;top:4px" width="8" height="5"><path d="M0 4.500h7L3.500 1z" fill="#000"/></svg></div>
<div class="btn" style="left:644px;top:40px;width:16px;height:31px"></div>
<div class="btn" style="left:644px;top:408px;width:16px;height:16px"><svg class="a" style="left:3px;top:5px" width="8" height="5"><path d="M0 .5h7L3.500 4z" fill="#000"/></svg></div>
</div>

<!-- ============ STATUS BAR ============ -->
<div id="status" class="a ui">
<div class="a" style="left:2px;top:3px;line-height:15px;font-size:11px"><em class="cjt">要查看帮助，请按</em> F1</div>
<div class="a pane" style="left:913px;width:56px"><em class="cjt">行</em> 12</div>
<div class="a pane" style="left:972px;width:44px"><em class="cjt">列</em> 31</div>
<div class="a pane" style="left:1019px;width:41px">15</div>
<div class="a pane" style="left:1063px;width:29px">29</div>
<div class="a pane" style="left:1095px;width:28px">PC</div>
</div>

<!-- ============ TASKBAR ============ -->
<div id="task" class="a ui">
<div class="btn" style="left:2px;top:2px;width:47px;height:21px"><svg class="a" style="left:1px;top:2px" width="16" height="15" viewBox="0 0 16 15" ><g transform="scale(1.08)"><path d="M1 2.500c2-1.500 4-1.500 6 0l-1 4.500c-2-1.500-4-1.500-6 0z" fill="#e86030"/><path d="M8 2.500c2 1.500 4 1.500 6 0l-1 4.500c-2 1.500-4 1.500-6 0z" fill="#50b040"/><path d="M0 8c2-1.500 4-1.500 6 0l-1 4.500c-2-1.500-4-1.500-6 0z" fill="#3070d0"/><path d="M7 8c2 1.500 4 1.500 6 0l-1 4.500c-2 1.500-4 1.500-6 0z" fill="#f0c020"/></g></svg><div class="a" style="left:19px;top:3px;line-height:14px"><em class="cjt" style="font-weight:bold">开始</em></div></div>
<svg class="a" style="left:58px;top:5px" width="14" height="17" viewBox="0 0 14 17" ><path d="M2 .500h10c.5 6-1.500 9.500-5 9.500s-5.500-3.500-5-9.500z" fill="#58a8ec" stroke="#3880c8" stroke-width=".7"/><path d="M4 1.500h3c0 4-.5 6-1.500 7-1.500-1.500-2-4-1.500-7z" fill="#a8d8f8"/><path d="M6 10h2v3h-2z" fill="#6090d0"/><ellipse cx="7" cy="14" rx="5.500" ry="2.200" fill="#dcd4f0" stroke="#a098c8" stroke-width=".6"/></svg><svg class="a" style="left:79px;top:4px" width="17" height="17" viewBox="0 0 17 17" ><g transform="rotate(-10 8.500 8.500)"><rect x="1.500" y="2" width="13.500" height="13" rx="2.500" fill="#3070c0" stroke="#184888"/><rect x="3.500" y="4" width="9.500" height="9" rx="2" fill="#f0f6ff"/><path d="M6 8.700h5c0-4-6-4-6 0s4.500 3.800 6 1.800" fill="none" stroke="#2058a8" stroke-width="1.600"/></g><path d="M12.500 6l3.500-1.500" stroke="#e8c850" stroke-width="1.300"/></svg><svg class="a" style="left:103px;top:5px" width="17" height="17" viewBox="0 0 17 17" ><circle cx="8" cy="8" r="7.500" fill="#c8988c"/><circle cx="7" cy="7" r="5.500" fill="#e0c0b4"/><circle cx="10" cy="8" r="6" fill="#d4d0c8"/><circle cx="10.500" cy="7.500" r="5.200" fill="#cc1020"/><circle cx="9.500" cy="6" r="2.200" fill="#f07078"/><path d="M5.500 7.500a5.200 5.200 0 0 1 2.500-4.300" fill="none" stroke="#600010" stroke-width="1.200"/></svg><svg class="a" style="left:127px;top:5px" width="14" height="16" viewBox="0 0 14 16" ><path d="M2.500 1l2.500 8" stroke="#b04838" stroke-width="2" fill="none"/><path d="M6 0l.800 8" stroke="#509048" stroke-width="1.800"/><path d="M8.500 .500l-.500 8" stroke="#d0a838" stroke-width="1.800"/><path d="M11.500 1.500l-2.500 7.500" stroke="#8050a0" stroke-width="2"/><path d="M3 6.500h8.500l-1.500 9h-5.500z" fill="#d8c078" stroke="#907848"/><path d="M5.200 8l.800 6" stroke="#f0e4b0" stroke-width="1.200"/><path d="M8.500 8l-.3 6" stroke="#c09858"/></svg><svg class="a" style="left:150px;top:4px" width="16" height="16" viewBox="0 0 16 16" ><path d="M5.500 8.500h9v6.500h-9z" fill="#fff" stroke="#101010"/><path d="M6.500 10h4v4.500h-4z" fill="#48a048"/><path d="M10.500 11h4.500v3.500h-4.500z" fill="#d8d040"/><path d="M11.500 8.500l3-4.500v7h-3z" fill="#fff" stroke="#101010" stroke-width=".8"/><path d="M3.500 2.500h11l-2.500 6h-11.500z" fill="#e25866" stroke="#200808"/><path d="M5.500 0v2.500M7.500 0v2.500M9.500 0v2.500M11.500 0v2.500M13.500 0v2.500" stroke="#100808"/></svg>
<svg class="a" style="left:194px;top:5px" width="8" height="8" viewBox="0 0 8 8"><path d="M.5 .5l2.500 3-2.500 3M4 .5l2.500 3-2.500 3" fill="none" stroke="#000" stroke-width="1.500"/></svg>
<div class="btn tb" style="left:207px"><svg class="a" style="left:4px;top:4px" width="16" height="14" viewBox="0 0 16 14" ><path d="M.500 3l1.500-2h4l1.500 2h7.500v10h-14.500z" fill="#f8e890" stroke="#a08820"/><path d="M1 5.500h14" stroke="#fffbd0"/><path d="M15.500 4v9.500h-15" fill="none" stroke="#706010"/></svg><span>day02</span></div>
<div class="btn tb" style="left:289px"><svg class="a" style="left:4px;top:2px" width="16" height="16" viewBox="0 0 16 16" ><path d="M4.500 .500h8l3 3v12h-11z" fill="#fff" stroke="#6078a8"/><path d="M7 5h6M7 8h6M7 11h6" stroke="#90a8d0"/><path d="M.500 3.500h9v8h-9z" fill="#d84830" stroke="#902010"/><circle cx="5" cy="7.500" r="2.300" fill="#fff"/><path d="M5 7.500v-2.300a2.300 2.300 0 0 1 2.300 2.300z" fill="#d84830"/></svg><span>Java<em class="cjt">基</em>...</span></div>
<div class="a tb dither" style="left:371px;border:1px solid;border-color:#404040 #fff #fff #404040;box-shadow:inset 1px 1px 0 #808080"><svg class="a" style="left:5px;top:4px" width="16" height="14" viewBox="0 0 16 14" ><path d="M0 0h16v14h-16z" fill="#000"/><path d="M0 0h16v3h-16z" fill="#c0c0c0"/><path d="M0 0h16v14h-16z" fill="none" stroke="#404040"/><text x="1.500" y="11.500" font-family="Liberation Sans" font-weight="bold" font-size="7.500" fill="#fff" textLength="12" lengthAdjust="spacingAndGlyphs" shape-rendering="auto">C:\</text></svg><span style="left:24px;top:1px">C:\WIN...</span></div>
<div class="btn tb" style="left:453px"><svg class="a" style="left:4px;top:2px" width="16" height="16" viewBox="0 0 16 16" ><path d="M5.500 8.500h9v6.500h-9z" fill="#fff" stroke="#101010"/><path d="M6.500 10h4v4.500h-4z" fill="#48a048"/><path d="M10.500 11h4.500v3.500h-4.500z" fill="#d8d040"/><path d="M11.500 8.500l3-4.500v7h-3z" fill="#fff" stroke="#101010" stroke-width=".8"/><path d="M3.500 2.500h11l-2.500 6h-11.500z" fill="#e25866" stroke="#200808"/><path d="M5.500 0v2.500M7.500 0v2.500M9.500 0v2.500M11.500 0v2.500M13.500 0v2.500" stroke="#100808"/></svg><span>EditPlus...</span></div>
<div class="btn tb" style="left:535px"><svg class="a" style="left:5px;top:2px" width="14" height="16" viewBox="0 0 14 16" ><path d="M2.500 1l2.500 8" stroke="#b04838" stroke-width="2" fill="none"/><path d="M6 0l.800 8" stroke="#509048" stroke-width="1.800"/><path d="M8.500 .500l-.500 8" stroke="#d0a838" stroke-width="1.800"/><path d="M11.500 1.500l-2.500 7.500" stroke="#8050a0" stroke-width="2"/><path d="M3 6.500h8.500l-1.500 9h-5.500z" fill="#d8c078" stroke="#907848"/><path d="M5.200 8l.800 6" stroke="#f0e4b0" stroke-width="1.200"/><path d="M8.500 8l-.3 6" stroke="#c09858"/></svg><span><em class="cjt">未命名</em> ...</span></div>
<div class="btn tb" style="left:617px"><svg class="a" style="left:5px;top:2px" width="14" height="16" viewBox="0 0 14 16" ><path d="M2.500 1l2.500 8" stroke="#b04838" stroke-width="2" fill="none"/><path d="M6 0l.800 8" stroke="#509048" stroke-width="1.800"/><path d="M8.500 .500l-.500 8" stroke="#d0a838" stroke-width="1.800"/><path d="M11.500 1.500l-2.500 7.500" stroke="#8050a0" stroke-width="2"/><path d="M3 6.500h8.500l-1.500 9h-5.500z" fill="#d8c078" stroke="#907848"/><path d="M5.200 8l.800 6" stroke="#f0e4b0" stroke-width="1.200"/><path d="M8.500 8l-.3 6" stroke="#c09858"/></svg><span><em class="cjt">未命名</em> ...</span></div>
<div class="btn tb" style="left:700px"><svg class="a" style="left:5px;top:2px" width="14" height="16" viewBox="0 0 14 16" ><path d="M2.500 1l2.500 8" stroke="#b04838" stroke-width="2" fill="none"/><path d="M6 0l.800 8" stroke="#509048" stroke-width="1.800"/><path d="M8.500 .500l-.500 8" stroke="#d0a838" stroke-width="1.800"/><path d="M11.500 1.500l-2.500 7.500" stroke="#8050a0" stroke-width="2"/><path d="M3 6.500h8.500l-1.500 9h-5.500z" fill="#d8c078" stroke="#907848"/><path d="M5.200 8l.800 6" stroke="#f0e4b0" stroke-width="1.200"/><path d="M8.500 8l-.3 6" stroke="#c09858"/></svg><span><em class="cjt">未命名</em> ...</span></div>
<div class="btn tb" style="left:781px"><svg class="a" style="left:5px;top:2px" width="14" height="16" viewBox="0 0 14 16" ><path d="M2.500 1l2.500 8" stroke="#b04838" stroke-width="2" fill="none"/><path d="M6 0l.800 8" stroke="#509048" stroke-width="1.800"/><path d="M8.500 .500l-.500 8" stroke="#d0a838" stroke-width="1.800"/><path d="M11.500 1.500l-2.500 7.500" stroke="#8050a0" stroke-width="2"/><path d="M3 6.500h8.500l-1.500 9h-5.500z" fill="#d8c078" stroke="#907848"/><path d="M5.200 8l.800 6" stroke="#f0e4b0" stroke-width="1.200"/><path d="M8.500 8l-.3 6" stroke="#c09858"/></svg><span><em class="cjt">未命名</em> ...</span></div>
<div class="btn tb" style="left:864px"><svg class="a" style="left:5px;top:2px" width="14" height="16" viewBox="0 0 14 16" ><path d="M2.500 1l2.500 8" stroke="#b04838" stroke-width="2" fill="none"/><path d="M6 0l.800 8" stroke="#509048" stroke-width="1.800"/><path d="M8.500 .500l-.500 8" stroke="#d0a838" stroke-width="1.800"/><path d="M11.500 1.500l-2.500 7.500" stroke="#8050a0" stroke-width="2"/><path d="M3 6.500h8.500l-1.500 9h-5.500z" fill="#d8c078" stroke="#907848"/><path d="M5.200 8l.800 6" stroke="#f0e4b0" stroke-width="1.200"/><path d="M8.500 8l-.3 6" stroke="#c09858"/></svg><span><em class="cjt">未命名</em> ...</span></div>
<div class="btn tb" style="left:947px"><svg class="a" style="left:4px;top:4px" width="16" height="14" viewBox="0 0 16 14" ><path d="M.500 3l1.500-2h4l1.500 2h7.500v10h-14.500z" fill="#f8e890" stroke="#a08820"/><path d="M1 5.500h14" stroke="#fffbd0"/><path d="M15.500 4v9.500h-15" fill="none" stroke="#706010"/></svg><span>day02avi</span></div>
<div class="btn tb" style="left:1030px"><svg class="a" style="left:5px;top:2px" width="14" height="16" viewBox="0 0 14 16" ><path d="M2.500 1l2.500 8" stroke="#b04838" stroke-width="2" fill="none"/><path d="M6 0l.800 8" stroke="#509048" stroke-width="1.800"/><path d="M8.500 .500l-.500 8" stroke="#d0a838" stroke-width="1.800"/><path d="M11.500 1.500l-2.500 7.500" stroke="#8050a0" stroke-width="2"/><path d="M3 6.500h8.500l-1.500 9h-5.500z" fill="#d8c078" stroke="#907848"/><path d="M5.200 8l.800 6" stroke="#f0e4b0" stroke-width="1.200"/><path d="M8.500 8l-.3 6" stroke="#c09858"/></svg><span><em class="cjt">未命名</em> ...</span></div>
</div>

<div class="a" style="left:1119px;top:733px;width:161px;height:65px;background:rgba(250,250,250,.86)"></div><div class="a" style="left:1125px;top:737.8px;font-family:'Liberation Sans','Noto Sans CJK SC',sans-serif;font-weight:900;font-size:19.2px;line-height:19.2px;letter-spacing:-.44px;color:#206c2c;white-space:nowrap;-webkit-text-stroke:.5px #206c2c">随时下免费资源网</div><div class="a" style="left:1126px;top:757px;font-family:'Liberation Sans',sans-serif;font-weight:bold;font-size:17.5px;line-height:20px;color:#000;transform:scaleX(.884);transform-origin:0 0;white-space:nowrap;-webkit-text-stroke:.35px #000">www.SuiShiXia.com</div><div class="a wmr" style="left:1122px;top:777px">数万</div><div class="a wmr" style="left:1161px;top:777px">网课</div><div class="a wmr" style="left:1203px;top:777px">教程</div><div class="a wmr" style="left:1243.5px;top:777px">资源</div>
<svg class="a" style="left:854px;top:493px" width="12" height="20" viewBox="0 0 12 20" ><path d="M1 .800v13.400l3-3 4 7.800 2.300-1-4-7.700 4-.800z" fill="#fff" stroke="#000" stroke-width=".6"/></svg>
</body></html>
